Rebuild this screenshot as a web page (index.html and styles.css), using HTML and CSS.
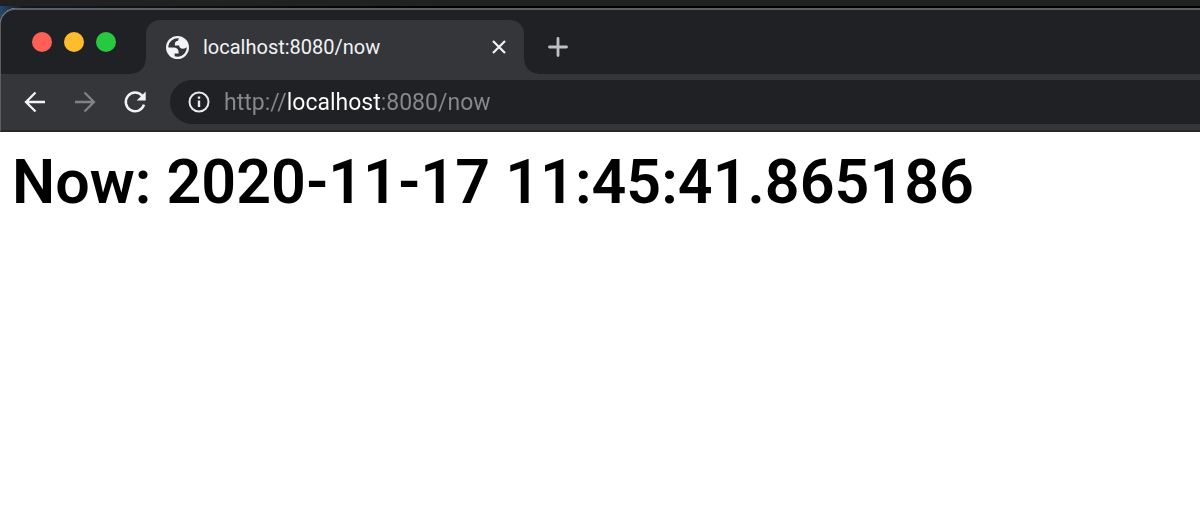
FILE: index.html
```html
<!DOCTYPE html>
<html lang="en">
<head>
<meta charset="utf-8">
<meta name="viewport" content="width=device-width, initial-scale=1">
<title>localhost:8080/now</title>
<link rel="stylesheet" href="styles.css">
</head>
<body>
<div class="browser">
  <header class="chrome">
    <div class="tab-strip">
      <div class="window-controls">
        <button class="light light-close" aria-label="Close window"></button>
        <button class="light light-minimize" aria-label="Minimize window"></button>
        <button class="light light-zoom" aria-label="Zoom window"></button>
      </div>
      <div class="tab">
        <svg class="tab-icon" viewBox="2 2 20 20" aria-hidden="true">
          <path fill="#f1f3f4" fill-rule="evenodd" d="M12 2a10 10 0 1 1 0 20a10 10 0 1 1 0-20zM4 12h4.400c3.407.022 4.922 1.730 4.543 5.127H9.488v2.470a8.004 8.004 0 0 0 10.498-8.083C19.327 12.504 18.200 13 16.700 13c-2.137 0-3.206-.916-3.206-2.750h-3.748c-.274-2.728.683-4.092 2.870-4.092 0-.975.327-1.597.811-1.970A8.004 8.004 0 0 0 4 12z"/>
        </svg>
        <span class="tab-title">localhost:8080/now</span>
        <button class="icon-button tab-close" aria-label="Close tab">
          <svg viewBox="0 0 14 14"><path d="M1 1l12 12M13 1L1 13" fill="none" stroke="#f1f3f4" stroke-width="2.200"/></svg>
        </button>
      </div>
      <button class="icon-button new-tab" aria-label="New tab">
        <svg viewBox="0 0 20 20"><path d="M10 1.500v17M1.500 10h17" fill="none" stroke="#bdc1c6" stroke-width="2.800" stroke-linecap="round"/></svg>
      </button>
    </div>
    <nav class="toolbar">
      <button class="icon-button" aria-label="Back">
        <svg viewBox="0 0 24 24"><path d="M22 12H3M12.500 2.500L3 12l9.500 9.500" fill="none" stroke="#f1f3f4" stroke-width="2.300"/></svg>
      </button>
      <button class="icon-button" aria-label="Forward">
        <svg viewBox="0 0 24 24"><path d="M2 12h19M11.500 2.500L21 12l-9.500 9.500" fill="none" stroke="#818284" stroke-width="2.300"/></svg>
      </button>
      <button class="icon-button" aria-label="Reload">
        <svg viewBox="0 0 24 24"><path d="M19.300 6A9.300 9.300 0 1 0 21 14.700" fill="none" stroke="#f1f3f4" stroke-width="2.500"/><path d="M22.700 1.500v9h-9z" fill="#f1f3f4"/></svg>
      </button>
      <div class="address-bar">
        <svg class="info-icon" viewBox="0 0 22 22" aria-hidden="true"><circle cx="11" cy="11" r="9.500" fill="none" stroke="#e8eaed" stroke-width="2"/><path d="M9.800 5.500h2.400v2.300H9.800zM9.800 9.500h2.400V16H9.800z" fill="#e8eaed"/></svg>
        <input class="address" type="text" value="http://localhost:8080/now" aria-label="Address" spellcheck="false">
      </div>
    </nav>
  </header>
  <main class="page">
    <h1 class="timestamp">Now: 2020-11-17 11:45:41.865186</h1>
  </main>
</div>
</body>
</html>
```
FILE: styles.css
```css
* {
  box-sizing: border-box;
}

body {
  margin: 0;
  padding-top: 8px;
  background: linear-gradient(#212121 6px, transparent 6px), linear-gradient(90deg, #24476b, #101820 24px, #000 460px);
  font-family: Roboto, "Liberation Sans", sans-serif;
}

.browser {
  display: flex;
  flex-direction: column;
  min-height: calc(100vh - 8px);
  background: #fff;
  border-top-left-radius: 16px;
}

.chrome {
  background: #35363a;
  border-top: 2px solid #5d5e60;
  border-left: 1px solid #5d5e60;
  border-bottom: 2px solid #292628;
  border-top-left-radius: 16px;
  overflow: hidden;
}

.tab-strip {
  display: flex;
  height: 64px;
  padding-top: 10px;
  background: #202124;
}

.window-controls {
  display: flex;
  gap: 12px;
  padding: 12px 30px 0 31px;
}

.light {
  width: 20px;
  height: 20px;
  padding: 0;
  border: 0;
  border-radius: 50%;
}

.light-close {
  background: #ff5f57;
}

.light-minimize {
  background: #ffbd2e;
}

.light-zoom {
  background: #28c940;
}

.tab {
  position: relative;
  display: flex;
  align-items: center;
  gap: 14px;
  width: 378px;
  padding: 0 18px 0 20px;
  background: #35363a;
  border-radius: 14px 14px 0 0;
}

/* Curved feet that join the tab to the toolbar */
.tab::before,
.tab::after {
  content: "";
  position: absolute;
  bottom: 0;
  width: 14px;
  height: 14px;
}

.tab::before {
  right: 100%;
  background: radial-gradient(circle at 0 0, #202124 13px, #35363a 14px);
}

.tab::after {
  left: 100%;
  background: radial-gradient(circle at 100% 0, #202124 13px, #35363a 14px);
}

.tab-icon {
  width: 23px;
  height: 23px;
}

.tab-title {
  flex: 1;
  color: #f1f3f4;
  font-size: 20px;
}

.icon-button {
  display: block;
  flex: none;
  width: 24px;
  height: 24px;
  padding: 0;
  border: 0;
  background: none;
}

.icon-button svg {
  display: block;
  width: 100%;
  height: 100%;
}

.tab-close {
  width: 14px;
  height: 14px;
}

.new-tab {
  width: 20px;
  height: 20px;
  margin: 17px 0 0 24px;
}

.toolbar {
  display: flex;
  align-items: center;
  gap: 26px;
  padding: 6px 0 6px 22px;
}

.address-bar {
  display: flex;
  flex: 1;
  align-items: center;
  gap: 14px;
  height: 44px;
  margin-left: -3px;
  padding-left: 18px;
  background: #202124;
  border-radius: 22px 0 0 22px;
}

.info-icon {
  width: 22px;
  height: 22px;
}

/* The host name is brighter than the rest of the address */
.address {
  flex: 1;
  min-width: 0;
  padding: 0;
  border: 0;
  outline: 0;
  background: linear-gradient(90deg, #88898b 62px, #fff 62px, #fff 157px, #88898b 157px);
  background-clip: text;
  color: transparent;
  font-family: inherit;
  font-size: 23px;
}

.page {
  flex: 1;
  padding: 14px 12px;
}

.timestamp {
  margin: 0;
  color: #000;
  font-size: 61px;
  font-weight: 600;
  line-height: 72px;
}
```
